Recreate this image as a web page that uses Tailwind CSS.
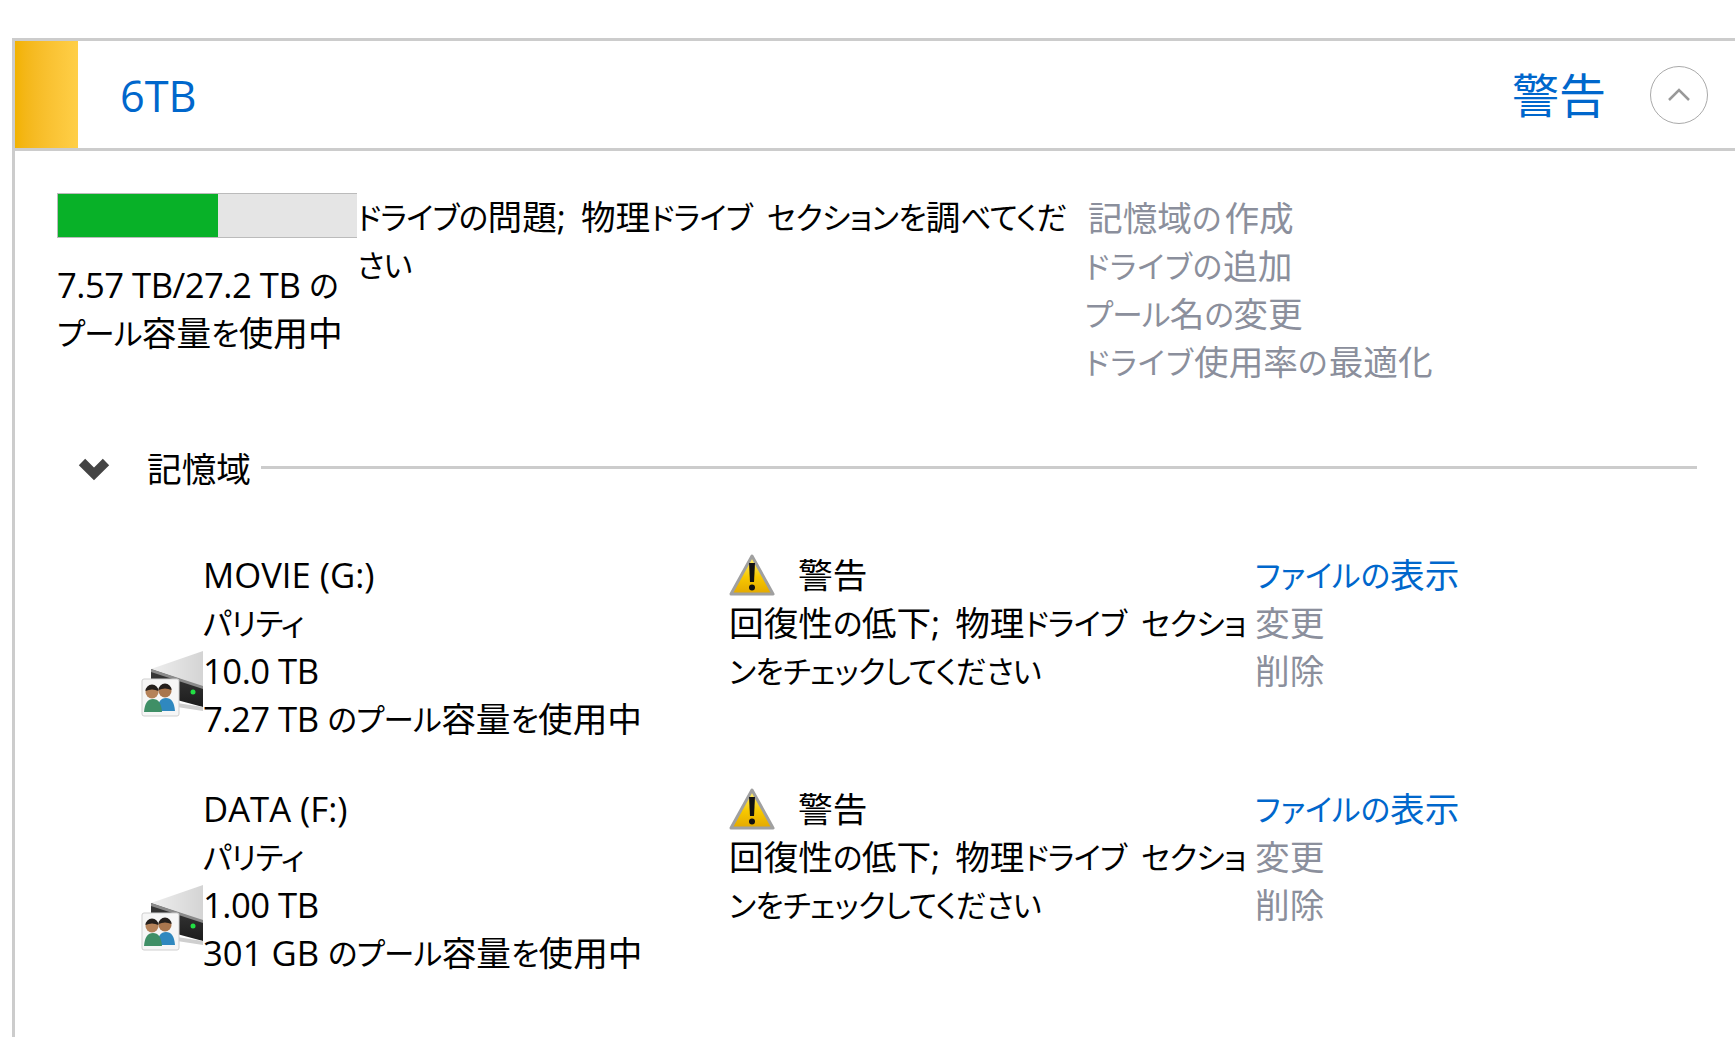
<!DOCTYPE html>
<html lang="ja"><head><meta charset="utf-8"><script src="https://cdn.jsdelivr.net/npm/@tailwindcss/browser@4"></script></head>
<body class="bg-white overflow-hidden">
<div class="w-[1735px] h-[1037px] overflow-hidden pt-[38px] pl-3 font-['Open_Sans','Noto_Sans_CJK_JP',sans-serif] text-[34.67px] leading-[48px] text-black [font-feature-settings:'palt'] [&_span]:text-[0.88em] [&_span]:leading-none [&_span]:tracking-[-0.02em] [&_span]:align-[1px]">
<div class="h-[999px] border-l-[3px] border-t-[3px] border-[#cccccc]">
  <header class="h-[110px] flex items-center border-b-[3px] border-[#cccccc]">
    <div class="w-[63px] h-full bg-gradient-to-r from-[#f2b200] to-[#ffcf47]"></div>
    <div class="ml-[42px] pt-[2px] text-[43.3px] text-[#0067cc] flex-1">6TB</div>
    <div class="pt-[1px] text-[47px] text-[#0067cc] mr-[44px]">警告</div>
    <button class="w-[58px] h-[58px] rounded-full border border-[#aaaaaa] mr-[27px] flex items-center justify-center">
      <svg width="24" height="16" viewBox="0 0 24 16"><path d="M2 13 L12 3 L22 13" fill="none" stroke="#999" stroke-width="2.5"/></svg>
    </button>
  </header>
  <section class="flex pl-[42px] pt-[42px] h-[294px]">
    <div class="w-[300px]">
      <div class="h-[45px] bg-[#e5e5e5] border border-[#bbbbbb] border-r-0">
        <div class="w-[160px] h-full bg-[#08b128]"></div>
      </div>
      <p class="mt-[23px] whitespace-nowrap"><em class="not-italic tracking-[-0.5px]">7.57 TB/27.2 TB</em> <span>の</span><br><span>プール</span>容量<span>を</span>使用中</p>
    </div>
    <p class="w-[728px] whitespace-nowrap [word-spacing:6px]"><span>ドライブの</span>問題; 物理<span>ドライブ</span> <span>セクションを</span>調<span>べてくだ</span><br><span>さい</span></p>
    <ul class="text-[#8b8f9c] mt-px whitespace-nowrap">
      <li class="ml-[3px] [&_span]:tracking-[0.1em]!">記憶域<span>の</span>作成</li>
      <li class="[&_span]:tracking-[0.03em]!"><span>ドライブの</span>追加</li>
      <li><span>プール</span>名<span>の</span>変更</li>
      <li class="[&_span]:tracking-[0.04em]!"><span>ドライブ</span>使用率<span>の</span>最適化</li>
    </ul>
  </section>
  <div class="flex items-center h-[48px] pl-[63px]">
    <svg width="32" height="24" viewBox="0 0 32 24"><path d="M4 5 L16 17 L28 5" fill="none" stroke="#444" stroke-width="9"/></svg>
    <div class="ml-[37px]">記憶域</div>
    <div class="ml-[10px] w-[1436px] h-[3px] bg-[#cccccc] -mt-[4px]"></div>
  </div>
  <div class="mt-[58px] flex flex-col gap-[42px]">
    <article class="flex h-[192px]">
      <div class="w-[188px] pl-[126px] pt-[100px] shrink-0">
        <svg width="62" height="68" viewBox="0 0 62 68"><defs><linearGradient id="d1" x1="0" y1="0" x2="0" y2="1"><stop offset="0" stop-color="#3a3a3a"/><stop offset="1" stop-color="#1c1c1c"/></linearGradient><linearGradient id="t1" x1="0" y1="0" x2="1" y2="0"><stop offset="0" stop-color="#eeeeee"/><stop offset="1" stop-color="#d4d4d4"/></linearGradient></defs><path d="M10 18 L62 0 V36 Z" fill="url(#t1)"/><path d="M10 18 L62 36 V56 L10 42 Z" fill="url(#d1)"/><path d="M10 18 L62 35 V38 L10 21 Z" fill="#8a8a8a"/><path d="M36 52 L62 56 V60 L36 56 Z" fill="#cfcfcf"/><circle cx="52" cy="41" r="2.5" fill="#22e044"/><rect x="1" y="28" width="37" height="37" rx="2" fill="#f6f6f6" stroke="#cfcfcf"/><circle cx="24" cy="40" r="6.5" fill="#a9764e"/><path d="M17.5 39 a6.5 6.5 0 0 1 13 0 q-6.5 -3 -13 0Z" fill="#241f1c"/><path d="M16 60 q1 -13 9 -13 q8 0 9 13Z" fill="#2f88bf"/><circle cx="11" cy="41" r="6.5" fill="#b58259"/><path d="M4.5 40 a6.5 6.5 0 0 1 13 0 q-6.5 -3 -13 0Z" fill="#241f1c"/><path d="M3 61 q1 -13 9 -13 q8 0 9 13Z" fill="#3f8f66"/></svg>
      </div>
      <div class="w-[526px] shrink-0 whitespace-nowrap"><p>MOVIE (G:)</p><p><span>パリティ</span></p><p class="tracking-[-0.5px]">10.0 TB</p><p><em class="not-italic tracking-[-0.5px]">7.27 TB</em> <span>のプール</span>容量<span>を</span>使用中</p></div>
      <div class="w-[526px] shrink-0 whitespace-nowrap">
        <div class="flex items-center h-[48px]"><svg width="46" height="44" viewBox="0 0 46 44"><defs><linearGradient id="w1" x1="0" y1="0" x2="0" y2="1"><stop offset="0" stop-color="#fff27a"/><stop offset="0.55" stop-color="#f7c800"/><stop offset="1" stop-color="#e3a800"/></linearGradient></defs><path d="M23 3 L44 41 H2 Z" fill="url(#w1)" stroke="#a0a0a0" stroke-width="3" stroke-linejoin="round"/><path d="M20 10 H26 L25 29 H21 Z" fill="#111"/><circle cx="23" cy="34.5" r="3" fill="#111"/></svg><div class="ml-[23px]">警告</div></div>
        <p class="[word-spacing:6px]">回復性<span>の</span>低下; 物理<span>ドライブ</span> <span>セクショ</span><br><span>ンをチェックしてください</span></p>
      </div>
      <ul class="text-[#8b8f9c] whitespace-nowrap"><li class="text-[#0067cc] [&_span]:tracking-[0em]!"><span>ファイルの</span>表示</li><li>変更</li><li>削除</li></ul>
    </article>
    <article class="flex h-[192px]">
      <div class="w-[188px] pl-[126px] pt-[100px] shrink-0">
        <svg width="62" height="68" viewBox="0 0 62 68"><defs><linearGradient id="d2" x1="0" y1="0" x2="0" y2="1"><stop offset="0" stop-color="#3a3a3a"/><stop offset="1" stop-color="#1c1c1c"/></linearGradient><linearGradient id="t2" x1="0" y1="0" x2="1" y2="0"><stop offset="0" stop-color="#eeeeee"/><stop offset="1" stop-color="#d4d4d4"/></linearGradient></defs><path d="M10 18 L62 0 V36 Z" fill="url(#t2)"/><path d="M10 18 L62 36 V56 L10 42 Z" fill="url(#d2)"/><path d="M10 18 L62 35 V38 L10 21 Z" fill="#8a8a8a"/><path d="M36 52 L62 56 V60 L36 56 Z" fill="#cfcfcf"/><circle cx="52" cy="41" r="2.5" fill="#22e044"/><rect x="1" y="28" width="37" height="37" rx="2" fill="#f6f6f6" stroke="#cfcfcf"/><circle cx="24" cy="40" r="6.5" fill="#a9764e"/><path d="M17.5 39 a6.5 6.5 0 0 1 13 0 q-6.5 -3 -13 0Z" fill="#241f1c"/><path d="M16 60 q1 -13 9 -13 q8 0 9 13Z" fill="#2f88bf"/><circle cx="11" cy="41" r="6.5" fill="#b58259"/><path d="M4.5 40 a6.5 6.5 0 0 1 13 0 q-6.5 -3 -13 0Z" fill="#241f1c"/><path d="M3 61 q1 -13 9 -13 q8 0 9 13Z" fill="#3f8f66"/></svg>
      </div>
      <div class="w-[526px] shrink-0 whitespace-nowrap"><p>DATA (F:)</p><p><span>パリティ</span></p><p class="tracking-[-0.5px]">1.00 TB</p><p>301 GB <span>のプール</span>容量<span>を</span>使用中</p></div>
      <div class="w-[526px] shrink-0 whitespace-nowrap">
        <div class="flex items-center h-[48px]"><svg width="46" height="44" viewBox="0 0 46 44"><defs><linearGradient id="w2" x1="0" y1="0" x2="0" y2="1"><stop offset="0" stop-color="#fff27a"/><stop offset="0.55" stop-color="#f7c800"/><stop offset="1" stop-color="#e3a800"/></linearGradient></defs><path d="M23 3 L44 41 H2 Z" fill="url(#w2)" stroke="#a0a0a0" stroke-width="3" stroke-linejoin="round"/><path d="M20 10 H26 L25 29 H21 Z" fill="#111"/><circle cx="23" cy="34.5" r="3" fill="#111"/></svg><div class="ml-[23px]">警告</div></div>
        <p class="[word-spacing:6px]">回復性<span>の</span>低下; 物理<span>ドライブ</span> <span>セクショ</span><br><span>ンをチェックしてください</span></p>
      </div>
      <ul class="text-[#8b8f9c] whitespace-nowrap"><li class="text-[#0067cc] [&_span]:tracking-[0em]!"><span>ファイルの</span>表示</li><li>変更</li><li>削除</li></ul>
    </article>
  </div>
</div>
</div>
</body></html>
